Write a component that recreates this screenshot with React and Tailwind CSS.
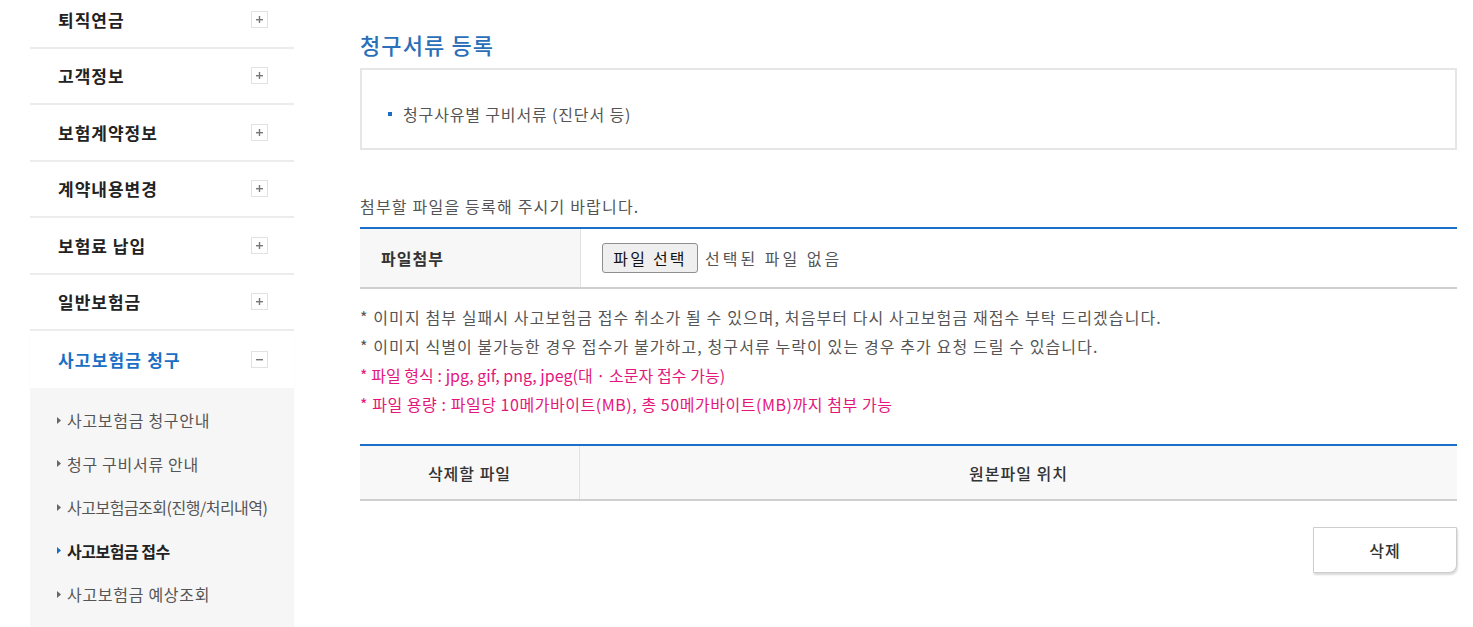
import { useState } from 'react';

const menus = ['퇴직연금', '고객정보', '보험계약정보', '계약내용변경', '보험료 납입', '일반보험금'];

const subMenus = [
  { label: '사고보험금 청구안내', track: 'tracking-[0.7px]' },
  { label: '청구 구비서류 안내', track: 'tracking-[0.7px]' },
  { label: '사고보험금조회(진행/처리내역)', track: 'tracking-[-0.5px]' },
  { label: '사고보험금 접수', track: 'tracking-[-0.5px]', active: true },
  { label: '사고보험금 예상조회', track: 'tracking-[0.7px]' },
];

const notes = [
  { text: '* 이미지 첨부 실패시 사고보험금 접수 취소가 될 수 있으며, 처음부터 다시 사고보험금 재접수 부탁 드리겠습니다.', track: 'tracking-[1.1px]' },
  { text: '* 이미지 식별이 불가능한 경우 접수가 불가하고, 청구서류 누락이 있는 경우 추가 요청 드릴 수 있습니다.', track: 'tracking-[1.1px]' },
  { text: '* 파일 형식 : jpg, gif, png, jpeg(대 · 소문자 접수 가능)', track: 'tracking-[0.05px]', pink: true },
  { text: '* 파일 용량 : 파일당 10메가바이트(MB), 총 50메가바이트(MB)까지 첨부 가능', track: 'tracking-[0.55px]', pink: true },
];

function ToggleBox({ open }) {
  return (
    <span className="w-[17px] h-[17px] border border-[#e2e2e2] bg-white flex items-center justify-center">
      <svg width="9" height="9" viewBox="0 0 9 9">
        <rect x="1" y="4" width="7" height="1.4" fill="#777" />
        {!open && <rect x="3.8" y="1" width="1.4" height="7" fill="#777" />}
      </svg>
    </span>
  );
}

function Triangle({ active }) {
  return (
    <svg width="4" height="7" viewBox="0 0 4 7" className="shrink-0">
      <path d="M0 0 L4 3.5 L0 7 Z" fill={active ? '#1a6fc4' : '#666'} />
    </svg>
  );
}

export default function App() {
  const [fileName, setFileName] = useState('');

  return (
    <div
      className="w-[1473px] h-[627px] overflow-hidden bg-white flex"
      style={{ fontFamily: '"Noto Sans CJK KR", "Noto Sans", sans-serif' }}
    >
      {/* sidebar */}
      <aside className="ml-[30px] w-[264px] -mt-[8px] shrink-0">
        {menus.map((m) => (
          <div
            key={m}
            className="h-[56.5px] border-b-2 border-[#ececec] flex items-center justify-between pl-[28px] pr-[26px]"
          >
            <span className="text-[17px] font-bold text-[#222] tracking-[1px]">{m}</span>
            <ToggleBox />
          </div>
        ))}
        <div className="h-[56.5px] flex items-center justify-between pl-[28px] pr-[26px] shadow-[0_2px_2px_rgba(0,0,0,0.04)]">
          <span className="text-[17px] font-bold text-[#1a6fc4] tracking-[1.2px]">사고보험금 청구</span>
          <ToggleBox open />
        </div>
        <ul className="bg-[#f6f6f6] pt-[11px] pb-[20px]">
          {subMenus.map((s) => (
            <li key={s.label} className="h-[43.5px] flex items-center gap-[6px] pl-[27px]">
              <Triangle active={s.active} />
              <span
                className={`text-[16px] ${s.track} ${
                  s.active ? 'font-bold text-[#222]' : 'text-[#555]'
                }`}
              >
                {s.label}
              </span>
            </li>
          ))}
        </ul>
      </aside>

      {/* main */}
      <main className="ml-[66px] w-[1097px] pt-[29px]">
        <h2 className="text-[22px] leading-[30px] font-medium text-[#2a6fb8] tracking-[1.1px]">청구서류 등록</h2>

        <div className="mt-[9px] h-[82px] border-2 border-[#e6e6e6] pl-[26px] pt-[32px]">
          <div className="flex items-center gap-[11px] leading-[24px]">
            <span className="w-[4px] h-[4px] bg-[#1a6fc4]" />
            <span className="text-[16px] text-[#555] tracking-[0.85px]">청구사유별 구비서류 (진단서 등)</span>
          </div>
        </div>

        <p className="mt-[44px] text-[16px] leading-[24px] text-[#555] tracking-[1.2px]">첨부할 파일을 등록해 주시기 바랍니다.</p>

        <div className="mt-[9px] border-t-2 border-t-[#1a6fc9] border-b-2 border-b-[#cfcfcf] flex h-[62px]">
          <div className="w-[221px] bg-[#f7f7f7] border-r border-[#e2e2e2] flex items-center pl-[21px]">
            <span className="text-[16px] font-bold text-[#333] tracking-[1px]">파일첨부</span>
          </div>
          <div className="flex-1 flex items-center pl-[21px] gap-[7px]">
            <label className="h-[30px] w-[96px] border border-[#8f8f8f] rounded-[3px] bg-[#efefef] flex items-center justify-center text-[16px] tracking-[2.2px] text-[#111] cursor-pointer">
              파일 선택
              <input
                type="file"
                className="hidden"
                onChange={(e) => setFileName(e.target.files[0]?.name || '')}
              />
            </label>
            <span className="text-[16px] tracking-[3px] text-[#555]">{fileName || '선택된 파일 없음'}</span>
          </div>
        </div>

        <ul className="mt-[14px]">
          {notes.map((n) => (
            <li
              key={n.text}
              className={`text-[16px] leading-[29px] ${n.track} ${n.pink ? 'text-[#e4157c]' : 'text-[#555]'}`}
            >
              {n.text}
            </li>
          ))}
        </ul>

        <div className="mt-[25px] border-t-2 border-t-[#1a6fc9] border-b-2 border-b-[#cfcfcf] flex h-[57px] bg-[#f8f8f8]">
          <div className="w-[220px] border-r border-[#e2e2e2] flex items-center justify-center">
            <span className="text-[16px] font-medium text-[#333] tracking-[1px]">삭제할 파일</span>
          </div>
          <div className="flex-1 flex items-center justify-center">
            <span className="text-[16px] font-medium text-[#333] tracking-[1px]">원본파일 위치</span>
          </div>
        </div>

        <div className="mt-[26px] flex justify-end">
          <button className="w-[144px] h-[46px] border border-[#cdcdcd] rounded-br-[8px] bg-white shadow-[1px_2px_2px_rgba(0,0,0,0.15)] text-[16px] font-medium text-[#333] tracking-[1px]">
            삭제
          </button>
        </div>
      </main>
    </div>
  );
}
